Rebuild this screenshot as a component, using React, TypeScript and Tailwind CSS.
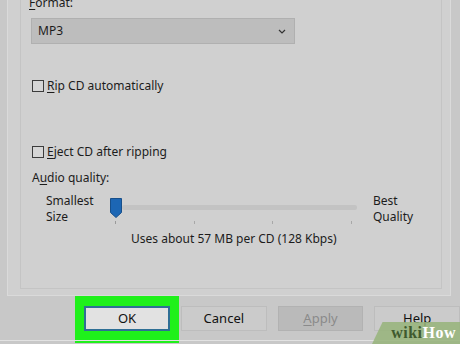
import React from "react";

const font = { fontFamily: '"Noto Sans", "Open Sans", Arial, sans-serif' };

function Check({ label, accel }: { label: string; accel: number }) {
  return (
    <div className="flex items-center gap-[3px] h-[12px]">
      <span className="w-[12px] h-[12px] border border-[#3c3c3c] bg-[#d6d6d6]" />
      <span>
        {label.slice(0, accel)}
        <span className="underline underline-offset-2">{label[accel]}</span>
        {label.slice(accel + 1)}
      </span>
    </div>
  );
}

function Btn({ children, kind }: { children: React.ReactNode; kind?: "ok" | "off" }) {
  const cls =
    kind === "ok"
      ? "bg-[#e2e2e2] border-[2px] border-[#2f6f95] text-[#111]"
      : kind === "off"
      ? "bg-[#bababa] border border-[#b2b2b2] text-[#8a8a8a]"
      : "bg-[#cbcbcb] border border-[#bdbdbd] text-[#111]";
  return (
    <div className={`h-[25px] w-[86px] flex items-center justify-center text-[13px] ${cls}`}>
      {children}
    </div>
  );
}

export default function App() {
  return (
    <div
      className="relative w-[460px] h-[344px] overflow-hidden bg-[#c8c8c8] text-[#1c1c1c] text-[12px] leading-none flex flex-col"
      style={font}
    >
      {/* tab page */}
      <div className="ml-[7px] mr-[9px] h-[296px] bg-[#d0d0d0] border-x border-b border-[#dadada] flex">
        <div className="ml-[12px] mr-[8px] mb-[6px] flex-1 border-x border-b border-[#c4c4c4] flex flex-col pl-[10px] -mt-[3px]">
          <div className="-ml-[2px] h-[13px]">
            <span className="underline underline-offset-2">F</span>ormat:
          </div>
          <div className="mt-[8px] w-[264px] h-[26px] bg-[#bdbdbd] border border-[#b0b0b0] flex items-center justify-between pl-[6px] pr-[8px]">
            <span>MP3</span>
            <svg width="8" height="5" viewBox="0 0 8 5" fill="none" stroke="#333" strokeWidth="1.2">
              <path d="M1 1l3 3 3-3" />
            </svg>
          </div>
          <div className="mt-[36px] ml-[1px]">
            <Check label="Rip CD automatically" accel={0} />
          </div>
          <div className="mt-[54px] ml-[1px]">
            <Check label="Eject CD after ripping" accel={0} />
          </div>
          <div className="mt-[14px] ml-[1px] h-[12px]">
            A<span className="underline underline-offset-2">u</span>dio quality:
          </div>
          <div className="mt-[9px] flex">
            <div className="ml-[15px] w-[64px] flex flex-col leading-[16px]">
              <span>Smallest</span>
              <span>Size</span>
            </div>
            <div className="w-[256px] flex flex-col">
              <div className="relative h-[26px]">
                <div className="mt-[12px] ml-[12px] w-[235px] h-[5px] bg-[#c3c3c3] rounded-[2px]" />
                <svg className="absolute left-0 top-[5px]" width="12" height="20" viewBox="0 0 12 20">
                  <path d="M0.5 0.5h11v14l-5.5 5l-5.5-5z" fill="#1c66b4" stroke="#174f8a" />
                </svg>
              </div>
              <div className="flex justify-between pl-[5px] pr-[14px] mt-[2px]">
                <span className="w-px h-[3px] bg-[#9a9a9a]" />
                <span className="w-px h-[3px] bg-[#a8a8a8]" />
                <span className="w-px h-[3px] bg-[#a8a8a8]" />
                <span className="w-px h-[3px] bg-[#a8a8a8]" />
              </div>
            </div>
            <div className="ml-[7px] flex flex-col leading-[16px]">
              <span>Best</span>
              <span>Quality</span>
            </div>
          </div>
          <div className="mt-[8px] ml-[100px]">Uses about 57 MB per CD (128 Kbps)</div>
        </div>
      </div>

      {/* buttons */}
      <div className="mt-[10px] flex pl-[84px] gap-[11px]">
        <div className="relative">
          <div className="absolute -left-[9px] -right-[9px] -top-[10px] -bottom-[12px] bg-[#1ff01b]" />
          <div className="relative">
            <Btn kind="ok">OK</Btn>
          </div>
        </div>
        <Btn>Cancel</Btn>
        <Btn kind="off">
          <span>
            <span className="underline underline-offset-2">A</span>pply
          </span>
        </Btn>
        <Btn>Help</Btn>
      </div>
      <div className="absolute left-0 right-0 bottom-[3px] h-px bg-[#e2e2e2]" />

      {/* watermark */}
      <div className="absolute right-0 bottom-0 w-[88px] h-[22px] bg-[#97b47a]/85 [clip-path:polygon(12%_0,100%_0,100%_100%,0_100%)] flex items-center justify-end pr-[4px]">
        <span
          className="text-[16px] font-bold tracking-[0.5px]"
          style={{ fontFamily: '"Liberation Serif", "DejaVu Serif", serif' }}
        >
          <span className="text-[#3f5a2e]">wiki</span>
          <span className="text-white">How</span>
        </span>
      </div>
    </div>
  );
}
